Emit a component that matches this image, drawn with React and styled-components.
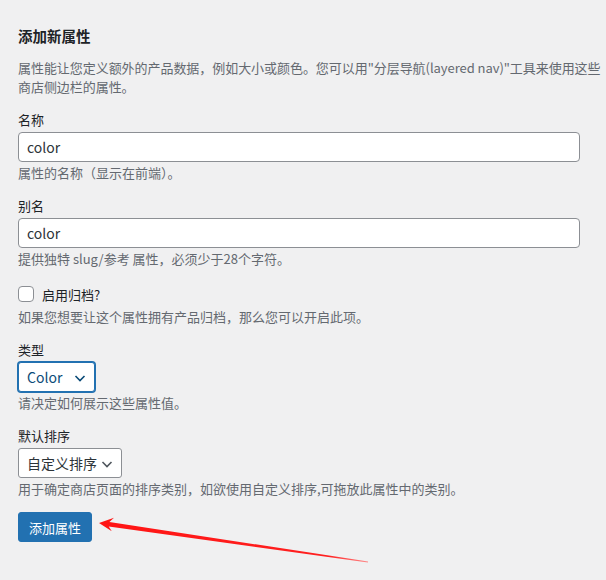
import React from "react";
import styled, { createGlobalStyle } from "styled-components";

const GlobalStyle = createGlobalStyle`
  html, body {
    margin: 0;
    padding: 0;
    background: #f0f0f1;
  }
  body {
    font-family: "Noto Sans CJK SC", "Noto Sans", sans-serif;
    font-size: 13px;
    color: #1d2327;
  }
  * {
    box-sizing: border-box;
  }
`;

const chevron = (color) =>
  `url("data:image/svg+xml,%3Csvg xmlns='http://www.w3.org/2000/svg' width='16' height='16' viewBox='0 0 16 16'%3E%3Cpath d='M3.5 6l4.5 4.5L12.5 6' fill='none' stroke='${encodeURIComponent(
    color
  )}' stroke-width='1.6'/%3E%3C/svg%3E")`;

const Page = styled.div`
  position: relative;
  min-height: 580px;
  padding: 26px 0 30px 18px;
  overflow: hidden;
`;

const Heading = styled.h2`
  margin: 0 0 12px;
  font-size: 14.5px;
  font-weight: 700;
  line-height: 20px;
  color: #1d2327;
`;

const Intro = styled.p`
  margin: 0 0 14px;
  font-size: 13px;
  line-height: 19px;
  letter-spacing: -0.05px;
  color: #646970;
`;

const Form = styled.form`
  display: flex;
  flex-direction: column;
  align-items: flex-start;
  gap: 14px;
`;

const Field = styled.div`
  display: flex;
  flex-direction: column;
  align-items: flex-start;
  width: 100%;
`;

const Label = styled.label`
  display: block;
  font-size: 13px;
  line-height: 20px;
  color: #1d2327;
`;

const TextInput = styled.input`
  width: calc(100% - 26px);
  height: 30px;
  margin: 2px 0 0;
  padding: 0 8px;
  font-family: inherit;
  font-size: 14px;
  color: #2c3338;
  background: #fff;
  border: 1px solid #8c8f94;
  border-radius: 4px;
  outline: none;
`;

const Select = styled.select`
  appearance: none;
  width: ${(p) => p.$w};
  height: 30px;
  margin: 2px 0 0;
  padding: 0 24px 0 8px;
  font-family: inherit;
  font-size: 14px;
  color: ${(p) => (p.$focused ? "#0a4b78" : "#2c3338")};
  background: #fff ${(p) => chevron(p.$focused ? "#0a4b78" : "#50575e")}
    no-repeat right 6px top 55%;
  background-size: 16px 16px;
  border: 1px solid ${(p) => (p.$focused ? "#2271b1" : "#8c8f94")};
  box-shadow: ${(p) => (p.$focused ? "0 0 0 1px #2271b1" : "none")};
  border-radius: 3px;
  outline: none;
`;

const Hint = styled.p`
  margin: 2px 0 0;
  font-size: 13px;
  line-height: 18px;
  color: #646970;
`;

const CheckRow = styled.label`
  display: flex;
  align-items: center;
  gap: 8px;
  height: 24px;
  font-size: 13px;
  color: #1d2327;
`;

const Box = styled.input`
  appearance: none;
  width: 16px;
  height: 16px;
  margin: 0;
  background: #fff;
  border: 1px solid #8c8f94;
  border-radius: 4px;
`;

const Submit = styled.button`
  height: 30px;
  padding: 0 10px;
  font-family: inherit;
  font-size: 13px;
  color: #fff;
  background: #2271b1;
  border: 1px solid #2271b1;
  border-radius: 3px;
  cursor: pointer;
`;

const Overlay = styled.svg`
  position: absolute;
  left: 0;
  top: 0;
  pointer-events: none;
`;

const Arrow = () => (
  <Overlay width="606" height="580" viewBox="0 0 606 580">
    <defs>
      <linearGradient id="fade" x1="99" y1="523" x2="368" y2="562" gradientUnits="userSpaceOnUse">
        <stop offset="0" stopColor="#ff1414" />
        <stop offset="0.85" stopColor="#ff2020" />
        <stop offset="1" stopColor="#ff8a8a" />
      </linearGradient>
    </defs>
    <polygon
      fill="url(#fade)"
      points="99,523 114,517.8 109.4,521.9 368.1,561.6 367.9,562.4 108.7,526.6 111.8,531.2"
    />
  </Overlay>
);

export default function App() {
  return (
    <>
      <GlobalStyle />
      <Page>
        <Heading>添加新属性</Heading>
        <Intro>
          属性能让您定义额外的产品数据，例如大小或颜色。您可以用"分层导航(layered nav)"工具来使用这些商店侧边栏的属性。
        </Intro>
        <Form onSubmit={(e) => e.preventDefault()}>
          <Field>
            <Label htmlFor="attr-name">名称</Label>
            <TextInput id="attr-name" defaultValue="color" />
            <Hint>属性的名称（显示在前端）。</Hint>
          </Field>
          <Field>
            <Label htmlFor="attr-slug">别名</Label>
            <TextInput id="attr-slug" defaultValue="color" />
            <Hint>提供独特 slug/参考 属性，必须少于28个字符。</Hint>
          </Field>
          <Field>
            <CheckRow>
              <Box type="checkbox" />
              启用归档?
            </CheckRow>
            <Hint>如果您想要让这个属性拥有产品归档，那么您可以开启此项。</Hint>
          </Field>
          <Field>
            <Label htmlFor="attr-type">类型</Label>
            <Select id="attr-type" $w="77px" $focused defaultValue="color">
              <option value="select">Select</option>
              <option value="color">Color</option>
            </Select>
            <Hint>请决定如何展示这些属性值。</Hint>
          </Field>
          <Field>
            <Label htmlFor="attr-order">默认排序</Label>
            <Select id="attr-order" $w="104px" defaultValue="menu_order">
              <option value="menu_order">自定义排序</option>
              <option value="name">名称</option>
            </Select>
            <Hint>用于确定商店页面的排序类别，如欲使用自定义排序,可拖放此属性中的类别。</Hint>
          </Field>
          <Submit type="submit">添加属性</Submit>
        </Form>
        <Arrow />
      </Page>
    </>
  );
}
